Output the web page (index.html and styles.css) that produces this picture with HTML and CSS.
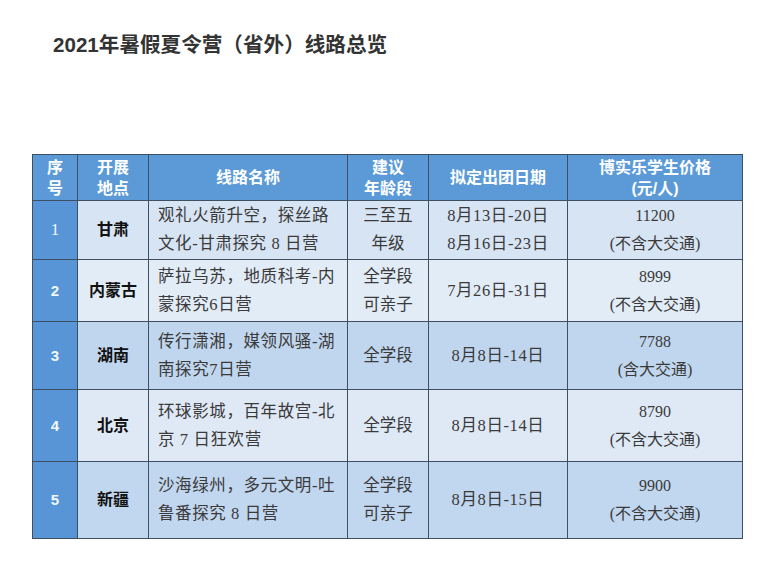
FILE: index.html
```html
<!DOCTYPE html>
<html lang="zh-CN">
<head>
<meta charset="utf-8">
<link rel="stylesheet" href="styles.css">
</head>
<body>
<div class="page">
  <h1 class="title">2021年暑假夏令营（省外）线路总览</h1>
  <table class="routes">
    <colgroup>
      <col class="c-no"><col class="c-loc"><col class="c-name"><col class="c-age"><col class="c-date"><col class="c-price">
    </colgroup>
    <thead>
      <tr class="head">
        <th>序<br>号</th>
        <th>开展<br>地点</th>
        <th>线路名称</th>
        <th>建议<br>年龄段</th>
        <th>拟定出团日期</th>
        <th>博实乐学生价格<br>(元/人)</th>
      </tr>
    </thead>
    <tbody>
      <tr class="r1">
        <td class="no serif">1</td>
        <td class="loc">甘肃</td>
        <td class="name">观礼火箭升空，探丝路<br>文化-甘肃探究 8 日营</td>
        <td class="ctr">三至五<br>年级</td>
        <td class="ctr date">8月13日-20日<br>8月16日-23日</td>
        <td class="ctr price">11200<br>(不含大交通)</td>
      </tr>
      <tr class="r2">
        <td class="no">2</td>
        <td class="loc">内蒙古</td>
        <td class="name">萨拉乌苏，地质科考-内<br>蒙探究6日营</td>
        <td class="ctr">全学段<br>可亲子</td>
        <td class="ctr date">7月26日-31日</td>
        <td class="ctr price">8999<br>(不含大交通)</td>
      </tr>
      <tr class="r3">
        <td class="no">3</td>
        <td class="loc">湖南</td>
        <td class="name">传行潇湘，媒领风骚-湖<br>南探究7日营</td>
        <td class="ctr">全学段</td>
        <td class="ctr date">8月8日-14日</td>
        <td class="ctr price">7788<br>(含大交通)</td>
      </tr>
      <tr class="r4">
        <td class="no">4</td>
        <td class="loc">北京</td>
        <td class="name">环球影城，百年故宫-北<br>京 7 日狂欢营</td>
        <td class="ctr">全学段</td>
        <td class="ctr date">8月8日-14日</td>
        <td class="ctr price">8790<br>(不含大交通)</td>
      </tr>
      <tr class="r5">
        <td class="no">5</td>
        <td class="loc">新疆</td>
        <td class="name">沙海绿州，多元文明-吐<br>鲁番探究 8 日营</td>
        <td class="ctr">全学段<br>可亲子</td>
        <td class="ctr date">8月8日-15日</td>
        <td class="ctr price">9900<br>(不含大交通)</td>
      </tr>
    </tbody>
  </table>
</div>
</body>
</html>
```

FILE: styles.css
```css
html, body {
  margin: 0;
  padding: 0;
  background: #ffffff;
}

.page {
  padding: 33px 0 0 32px;
}

.title {
  margin: 0 0 0 21px;
  font-family: "Liberation Sans", "Noto Sans CJK SC", sans-serif;
  font-size: 20.6px;
  line-height: 24px;
  font-weight: bold;
  color: #333333;
}

.routes {
  margin-top: 97px;
  border-collapse: collapse;
  width: 710px;
  table-layout: fixed;
  font-family: "Liberation Serif", "Noto Sans CJK SC", serif;
  font-size: 16.5px;
  color: #3a3a3a;
  border: 1.5px solid #34465a;
}

.c-no { width: 45px; }
.c-loc { width: 71px; }
.c-name { width: 199px; }
.c-age { width: 81px; }
.c-date { width: 139px; }
.c-price { width: 175px; }

.routes th,
.routes td {
  border: 1px solid #3e4f62;
  padding: 0;
  vertical-align: middle;
}

.head {
  height: 46px;
  background: #5b9ad7;
}

.head th {
  font-family: "Liberation Sans", "Noto Sans CJK SC", sans-serif;
  font-weight: bold;
  font-size: 16px;
  line-height: 21px;
  color: #ffffff;
  text-align: center;
}

.r1 { height: 59px; background: #d7e4f3; }
.r2 { height: 62px; background: #e2ecf7; }
.r3 { height: 68px; background: #c0d6ee; }
.r4 { height: 72px; background: #dfe9f6; }
.r5 { height: 77px; background: #c1d6ef; }

.routes td {
  line-height: 28px;
}

.no {
  background: #5795d6;
  color: #f2f7fd;
  text-align: center;
  font-family: "Liberation Sans", sans-serif;
  font-weight: bold;
  font-size: 15px;
}

.no.serif {
  font-family: "Liberation Serif", serif;
  font-weight: normal;
  font-size: 17px;
}

.loc {
  text-align: center;
  font-family: "Liberation Sans", "Noto Sans CJK SC", sans-serif;
  font-weight: bold;
  font-size: 16px;
  color: #111111;
}

.name {
  padding-left: 9px !important;
  letter-spacing: 0.6px;
  white-space: nowrap;
}

.ctr {
  text-align: center;
}

.date {
  letter-spacing: 0.6px;
}

.price {
  font-size: 16px;
}
```
